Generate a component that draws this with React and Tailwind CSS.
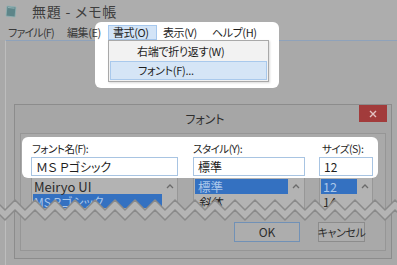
import React from 'react';

const xs = Array.from({ length: 42 }, (_, i) => -5 + i * 10);
const topLine = xs.map((x, i) => `${x},${i % 2 === 0 ? 4 : 14}`).join(' ');
const bottomLine = xs.map((x, i) => `${x},${i % 2 === 0 ? 14 : 24}`).join(' ');
const band = topLine + ' ' + xs.map((x, i) => `${x},${i % 2 === 0 ? 14 : 24}`).reverse().join(' ');

const UpArrow = () => (
  <svg width="8" height="6" viewBox="0 0 8 6" className="shrink-0">
    <path d="M1 5 L4 2 L7 5" stroke="#6b6b6b" strokeWidth="1.3" fill="none" />
  </svg>
);

const NotepadIcon = () => (
  <svg width="12" height="13" viewBox="0 0 12 13">
    <path d="M2 1 L11 2 L10 12 L1 11 Z" fill="#5d8589" stroke="#8fb0b2" strokeWidth="0.8" />
    <path d="M3 2.5 L9.5 3.2" stroke="#9fc0c2" strokeWidth="0.8" />
  </svg>
);

const App = () => {
  return (
    <div className="relative w-[397px] h-[265px] overflow-hidden bg-[#a9a9a9] text-[#3a3a3a] font-['Noto_Sans_CJK_JP',sans-serif] [font-feature-settings:'palt']">
      <div className="bg-[#adadad]">
        <div className="flex h-[22px] items-center pl-[5px]">
          <NotepadIcon />
          <span className="ml-[15px] text-[14px] leading-none tracking-[0.8px] text-[#3e3e3e]">無題 - メモ帳</span>
        </div>
        <div className="relative z-10 flex h-[18px] items-end whitespace-nowrap text-[11px] leading-none tracking-[-0.4px]">
          <div className="ml-[3px] flex h-[15px] w-[59px] items-center pl-[5px] tracking-[-0.8px]">ファイル(F)</div>
          <div className="flex h-[15px] w-[46px] items-center pl-[5px]">編集(E)</div>
          <div className="flex h-[15px] w-[49px] items-center border border-[#a6c8ee] bg-[#d3e4f7] pl-[4px] text-[#1e1e1e]">書式(O)</div>
          <div className="flex h-[15px] w-[50px] items-center pl-[6px] text-[#1e1e1e]">表示(V)</div>
          <div className="flex h-[15px] items-center pl-[5px] text-[#1e1e1e]">ヘルプ(H)</div>
        </div>
      </div>

      <div className="ml-[5px] h-[225px] border-l border-t border-l-[#bdbdbd] border-t-[#8fa2ba]">
        <div className="mt-[216px] flex items-center">
          <span className="ml-[100px] h-[1px] w-[6px] bg-[#444]" />
          <span className="ml-[6px] h-[2px] w-[2px] bg-[#444]" />
          <span className="ml-[104px] h-[1px] w-[8px] bg-[#444]" />
          <span className="ml-[8px] h-[2px] w-[9px] bg-[#444]" />
          <span className="ml-[9px] h-[2px] w-[2px] bg-[#444]" />
          <span className="ml-[24px] h-[2px] w-[2px] bg-[#444]" />
          <span className="ml-[65px] h-[2px] w-[2px] bg-[#444]" />
        </div>
      </div>

      {/* spotlight over the menu */}
      <div className="absolute left-[95px] top-[22px] h-[66px] w-[184px] rounded-[6px] bg-white" />

      {/* format menu */}
      <div className="absolute left-[108px] top-[40px] z-20 w-[161px] whitespace-nowrap border border-[#a9a9a9] bg-[#f2f2f2] pb-[1px] text-[11px] leading-none tracking-[-0.3px] text-[#1e1e1e] shadow-[1px_1px_2px_rgba(0,0,0,0.15)]">
        <div className="flex h-[20px] items-center pl-[28px]">右端で折り返す(W)</div>
        <div className="mx-[1px] flex h-[19px] items-center border border-[#a9c9ec] bg-[#d5e5f6] pl-[27px]">フォント(F)...</div>
      </div>

      {/* font dialog */}
      <div className="absolute left-[14px] top-[104px] w-[378px] border border-[#8c8c8c] bg-[#a6a6a6] pb-[7px]">
        <div className="relative flex h-[28px] items-center justify-center text-[12px] text-[#2e2e2e]">
          <span className="ml-[4px]">フォント</span>
          <div className="absolute right-[4px] top-0 flex h-[17px] w-[28px] items-center justify-center bg-[#a23b3b]">
            <svg width="8" height="8" viewBox="0 0 8 8">
              <path d="M1 1 L7 7 M7 1 L1 7" stroke="#e3c2c2" strokeWidth="1.4" />
            </svg>
          </div>
        </div>
        <div className="mx-[5px] border border-[#969696] bg-[#a9a9a9] pb-[8px]">
          <div className="ml-[1px] mt-[3px] flex h-[41px] w-[356px] gap-[15px] whitespace-nowrap rounded-[6px] bg-white pl-[9px] pt-[5px] text-[10.5px] leading-[13px] text-[#1e1e1e]">
            <div className="w-[147px]">
              <div className="h-[13px] pl-[1px] tracking-[-0.5px]">フォント名(F):</div>
              <div className="mt-[2px] flex h-[19px] items-center border border-[#a8c4e2] pl-[4px] text-[12px]">ＭＳ Ｐゴシック</div>
            </div>
            <div className="w-[112px]">
              <div className="h-[13px] tracking-[-0.5px]">スタイル(Y):</div>
              <div className="mt-[2px] flex h-[19px] items-center border border-[#a8c4e2] pl-[4px] text-[12px]">標準</div>
            </div>
            <div className="ml-[-1px] w-[54px]">
              <div className="h-[13px] pl-[3px] tracking-[-0.5px]">サイズ(S):</div>
              <div className="mt-[2px] flex h-[19px] items-center border border-[#a8c4e2] pl-[4px] text-[12px]">12</div>
            </div>
          </div>

          <div className="flex h-[32px] pl-[10px] leading-[13px]">
            <div className="flex w-[147px] border-x border-[#979797] bg-[#b3b3b3]">
              <div className="flex-1 pl-[1px] pt-[1px]">
                <div className="flex h-[15px] items-center pl-[1px] text-[13px] text-[#2a2a2a]">Meiryo UI</div>
                <div className="flex h-[14px] items-center bg-[#3471c1] pl-[1px] text-[12px] text-[#a8c6ea]">MS Pゴシック</div>
              </div>
              <div className="flex w-[15px] justify-center pt-[5px]">
                <UpArrow />
              </div>
            </div>
            <div className="ml-[15px] flex w-[112px] border-x border-[#979797] bg-[#b3b3b3]">
              <div className="flex-1 pl-[1px] pt-[1px]">
                <div className="flex h-[15px] items-center bg-[#3471c1] pl-[3px] text-[12.5px] text-[#a8c6ea]">標準</div>
                <div className="flex h-[15px] items-center pl-[3px] text-[12px] italic text-[#222]">斜体</div>
              </div>
              <div className="flex w-[16px] justify-center pt-[5px]">
                <UpArrow />
              </div>
            </div>
            <div className="ml-[14px] flex w-[54px] border-x border-[#979797] bg-[#b3b3b3]">
              <div className="flex-1 pl-[1px] pt-[1px]">
                <div className="flex h-[15px] items-center bg-[#3471c1] pl-[2px] text-[12.5px] text-[#a8c6ea]">12</div>
                <div className="flex h-[14px] items-center pl-[2px] text-[12px] text-[#2a2a2a]">14</div>
              </div>
              <div className="flex w-[15px] justify-center pt-[5px]">
                <UpArrow />
              </div>
            </div>
          </div>

          <div className="mt-[12px] flex justify-end gap-[18px] whitespace-nowrap pr-[20px] text-[11px] text-[#2e2e2e]">
            <div className="flex h-[20px] w-[66px] items-center justify-center border border-[#7191b6] bg-[#adadad] text-[12px]">OK</div>
            <div className="flex h-[20px] w-[47px] items-center justify-center border border-[#8c8c8c] bg-[#adadad] tracking-[-0.4px]">キャンセル</div>
          </div>
        </div>
      </div>

      {/* torn edge */}
      <svg width="397" height="30" viewBox="0 0 397 30" className="absolute left-0 top-[196px] z-30">
        <polygon points={band} fill="#b4b4b4" />
        <polyline points={topLine} fill="none" stroke="#8a8a8a" strokeWidth="1.5" />
        <polyline points={bottomLine} fill="none" stroke="#8a8a8a" strokeWidth="1.5" />
      </svg>
    </div>
  );
};

export default App;
